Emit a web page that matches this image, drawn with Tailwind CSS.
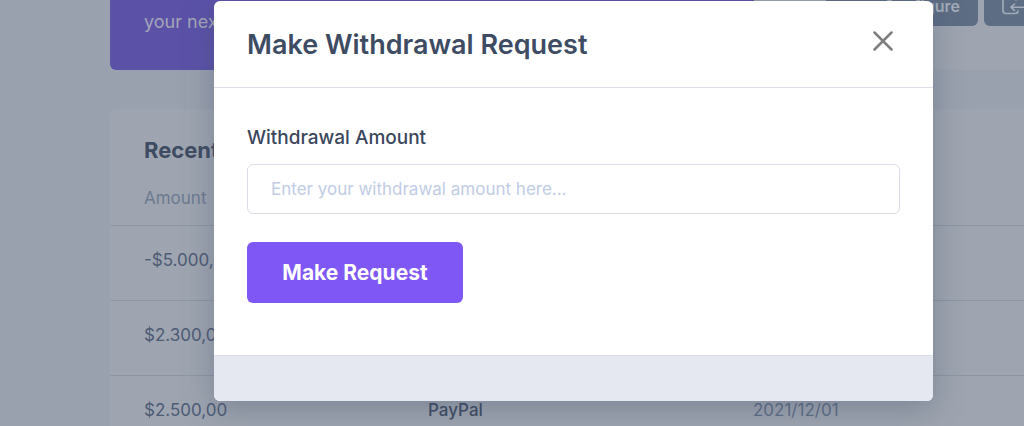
<!DOCTYPE html>
<html lang="en">
<head>
  <meta charset="UTF-8">
  <meta name="viewport" content="width=device-width, initial-scale=1.0">
  <title>Make Withdrawal Request</title>
  <script src="https://cdn.jsdelivr.net/npm/@tailwindcss/browser@4"></script>
</head>
<body class="relative h-screen overflow-hidden bg-[#99a1ae] font-['Inter','Liberation_Sans',sans-serif] text-[#4d5b75]">

  <!-- Page behind the modal -->
  <div class="pl-[110px]">
    <div class="flex h-[70px] bg-[#9ea5b0]">
      <section class="w-[644px] rounded-b-md bg-[#5b52a8] px-[34px] pt-2">
        <p class="text-lg/7 text-[#a3a5b8]">your next payout</p>
      </section>
      <div class="flex flex-1 items-start justify-end">
        <button type="button" class="h-[26px] w-[152px] rounded-b-md bg-[#5d6d84] pr-[18px] pb-5 text-right text-base/3 font-semibold text-[#a3acb8]">Configure</button>
        <button type="button" aria-label="Log out" class="ml-1.5 flex h-[26px] w-10 justify-end rounded-bl-md bg-[#5d6d84] text-[#a3acb8]">
          <svg class="h-5 w-6" viewBox="0 0 24 20" fill="none" stroke="currentColor" stroke-width="1.6" stroke-linecap="round" stroke-linejoin="round"><path d="M16 0q0-3-3-3H6q-3 0-3 3v10.500q0 3 3 3h9q3 0 3-2.500M11 7.200h15M14.500 4L11 7.200l3.500 3.300"/></svg>
        </button>
      </div>
    </div>

    <section class="mt-[39px] rounded-tl-md bg-[#9ea5b0]">
      <h2 class="px-[34px] pt-[26px] text-[22px]/[30px] font-bold text-[#3e4c63]">Recent Transactions</h2>
      <table class="mt-2 w-full table-fixed text-left text-[17px]">
        <thead>
          <tr class="h-[52px] border-b border-[#8b97a6] text-[#6c7a90]">
            <th class="w-[284px] pl-[34px] font-normal">Amount</th>
            <th class="w-[325px] pl-[34px] font-normal">Method</th>
            <th class="pl-[34px] font-normal">Date</th>
          </tr>
        </thead>
        <tbody>
          <tr class="h-[75px] border-b border-[#8b97a6]">
            <td class="pb-1 pl-[34px]">-$5.000,00</td>
            <td class="pb-1 pl-[34px] font-medium">PayPal</td>
            <td class="pb-1 pl-[34px]">2021/12/01</td>
          </tr>
          <tr class="h-[75px] border-b border-[#8b97a6]">
            <td class="pb-1 pl-[34px]">$2.300,00</td>
            <td class="pb-1 pl-[34px] font-medium">PayPal</td>
            <td class="pb-1 pl-[34px]">2021/12/01</td>
          </tr>
          <tr class="h-[75px]">
            <td class="pb-1 pl-[34px]">$2.500,00</td>
            <td class="pb-1 pl-[34px] font-medium text-[#3e4c63]">PayPal</td>
            <td class="pb-1 pl-[34px] text-[#5f6e87]">2021/12/01</td>
          </tr>
        </tbody>
      </table>
    </section>
  </div>

  <!-- Modal -->
  <div class="absolute inset-0 flex items-start justify-center pt-px pl-[123px]">
    <div role="dialog" aria-modal="true" aria-labelledby="modalTitle" class="w-[719px] overflow-hidden rounded-md bg-white shadow-[0_8px_32px_rgba(60,72,100,0.35)]">
      <div class="flex items-center justify-between border-b border-[#dcdfea] px-[33px] pt-[21px] pb-[19px]">
        <h1 id="modalTitle" class="text-[27px]/[46px] font-semibold text-[#3e4c63]">Make Withdrawal Request</h1>
        <button type="button" aria-label="Close" class="mr-[7px] mb-2 text-[#7e7e7e]">
          <svg class="size-5" viewBox="0 0 20 20" fill="none" stroke="currentColor" stroke-width="2.500" stroke-linecap="round"><path d="M1.500 1.500l17 17M18.500 1.500l-17 17"/></svg>
        </button>
      </div>
      <form class="px-[33px] pt-9 pb-[52px]">
        <label for="amount" class="block text-[19px]/7 font-medium text-[#3a475c]">Withdrawal Amount</label>
        <input id="amount" type="text" placeholder="Enter your withdrawal amount here..." class="mt-3 block h-[50px] w-full rounded-md border border-[#d9dce9] px-[23px] text-[17px] placeholder:text-[#c0cce6]">
        <button type="button" class="mt-7 h-[61px] w-[216px] rounded-md bg-[#7e57f5] text-[21px] font-bold text-white">Make Request</button>
      </form>
      <div class="h-[46px] border-t border-[#d9dce8] bg-[#e5e8f1]"></div>
    </div>
  </div>
</body>
</html>
